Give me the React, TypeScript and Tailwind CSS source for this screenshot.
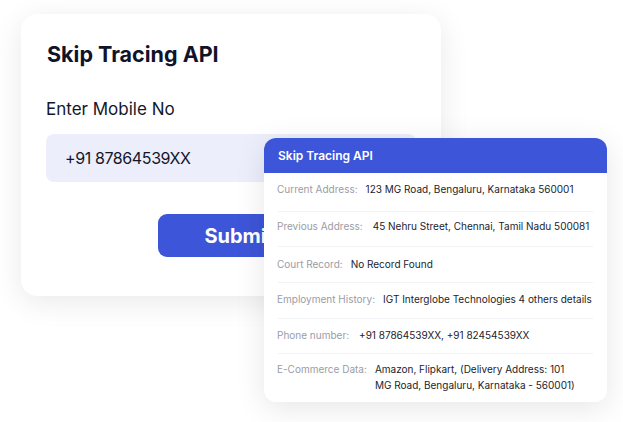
import React from "react";

const rows: { label: string; value: string; gap: string; pt: string; h: string }[] = [
  { label: "Current Address:", value: "123 MG Road, Bengaluru, Karnataka 560001", gap: "ml-[8px]", pt: "pt-[9px]", h: "h-[38px]" },
  { label: "Previous Address:", value: "45 Nehru Street, Chennai, Tamil Nadu 500081", gap: "ml-[10px]", pt: "pt-[7px]", h: "h-[34px]" },
  { label: "Court Record:", value: "No Record Found", gap: "ml-[8px]", pt: "pt-[10px]", h: "h-[35px]" },
  { label: "Employment History:", value: "IGT Interglobe Technologies 4 others details", gap: "ml-[8px]", pt: "pt-[9px]", h: "h-[35px]" },
  { label: "Phone number:", value: "+91 87864539XX, +91 82454539XX", gap: "ml-[10px]", pt: "pt-[9px]", h: "h-[34px]" },
];

export default function App() {
  return (
    <div
      className="relative w-[623px] h-[422px] bg-white overflow-hidden"
      style={{ fontFamily: "Inter, 'Noto Sans', sans-serif" }}
    >
      {/* Back card */}
      <div className="ml-[21px] mt-[14px] w-[420px] h-[282px] rounded-[16px] bg-white shadow-[0_6px_30px_rgba(0,0,0,0.09)] pl-[25px] pt-[26px]">
        <h1 className="pl-[1px] text-[21.5px] leading-[28px] font-bold text-[#10142a]">Skip Tracing API</h1>
        <div className="mt-[30px] text-[17px] leading-[22px] text-[#14172a]">Enter Mobile No</div>
        <div className="mt-[14px] w-[370px] h-[48px] rounded-[8px] bg-[#eceefb] flex items-center pl-[19px] text-[16px] tracking-[-0.4px] text-[#14172a]">
          +91 87864539XX
        </div>
        <div className="ml-[112px] mt-[32px] w-[162px] h-[43px] rounded-[9px] bg-[#3d55d8] flex items-center justify-center text-[20px] font-bold text-white">
          Submit
        </div>
      </div>

      {/* Front card (overlay) */}
      <div className="absolute left-[264px] top-[138px] w-[343px] h-[264px] rounded-[12px] bg-white shadow-[0_6px_30px_rgba(0,0,0,0.10)] overflow-hidden">
        <div className="h-[35px] bg-[#3d55d8] flex items-center pl-[14px] text-[12px] font-semibold text-white">
          Skip Tracing API
        </div>
        {rows.map((r, i) => (
          <div key={i}>
            {i > 0 && <div className="mx-[14px] h-px bg-[#f2f3f6]" />}
            <div className={`flex items-start px-[13px] ${r.pt} ${r.h} text-[10px] leading-[15px]`}>
              <span className="text-[#9a9ca6] whitespace-nowrap">{r.label}</span>
              <span className={`${r.gap} text-[#1a1d2e] whitespace-nowrap`}>{r.value}</span>
            </div>
          </div>
        ))}
        <div className="mx-[14px] h-px bg-[#f2f3f6]" />
        <div className="flex items-start px-[13px] pt-[7px] text-[10px] leading-[16px]">
          <span className="text-[#9a9ca6] whitespace-nowrap">E-Commerce Data:</span>
          <span className="ml-[8px] text-[#1a1d2e] max-w-[204px]">
            Amazon, Flipkart, (Delivery Address: 101 MG Road, Bengaluru, Karnataka - 560001)
          </span>
        </div>
      </div>
    </div>
  );
}
